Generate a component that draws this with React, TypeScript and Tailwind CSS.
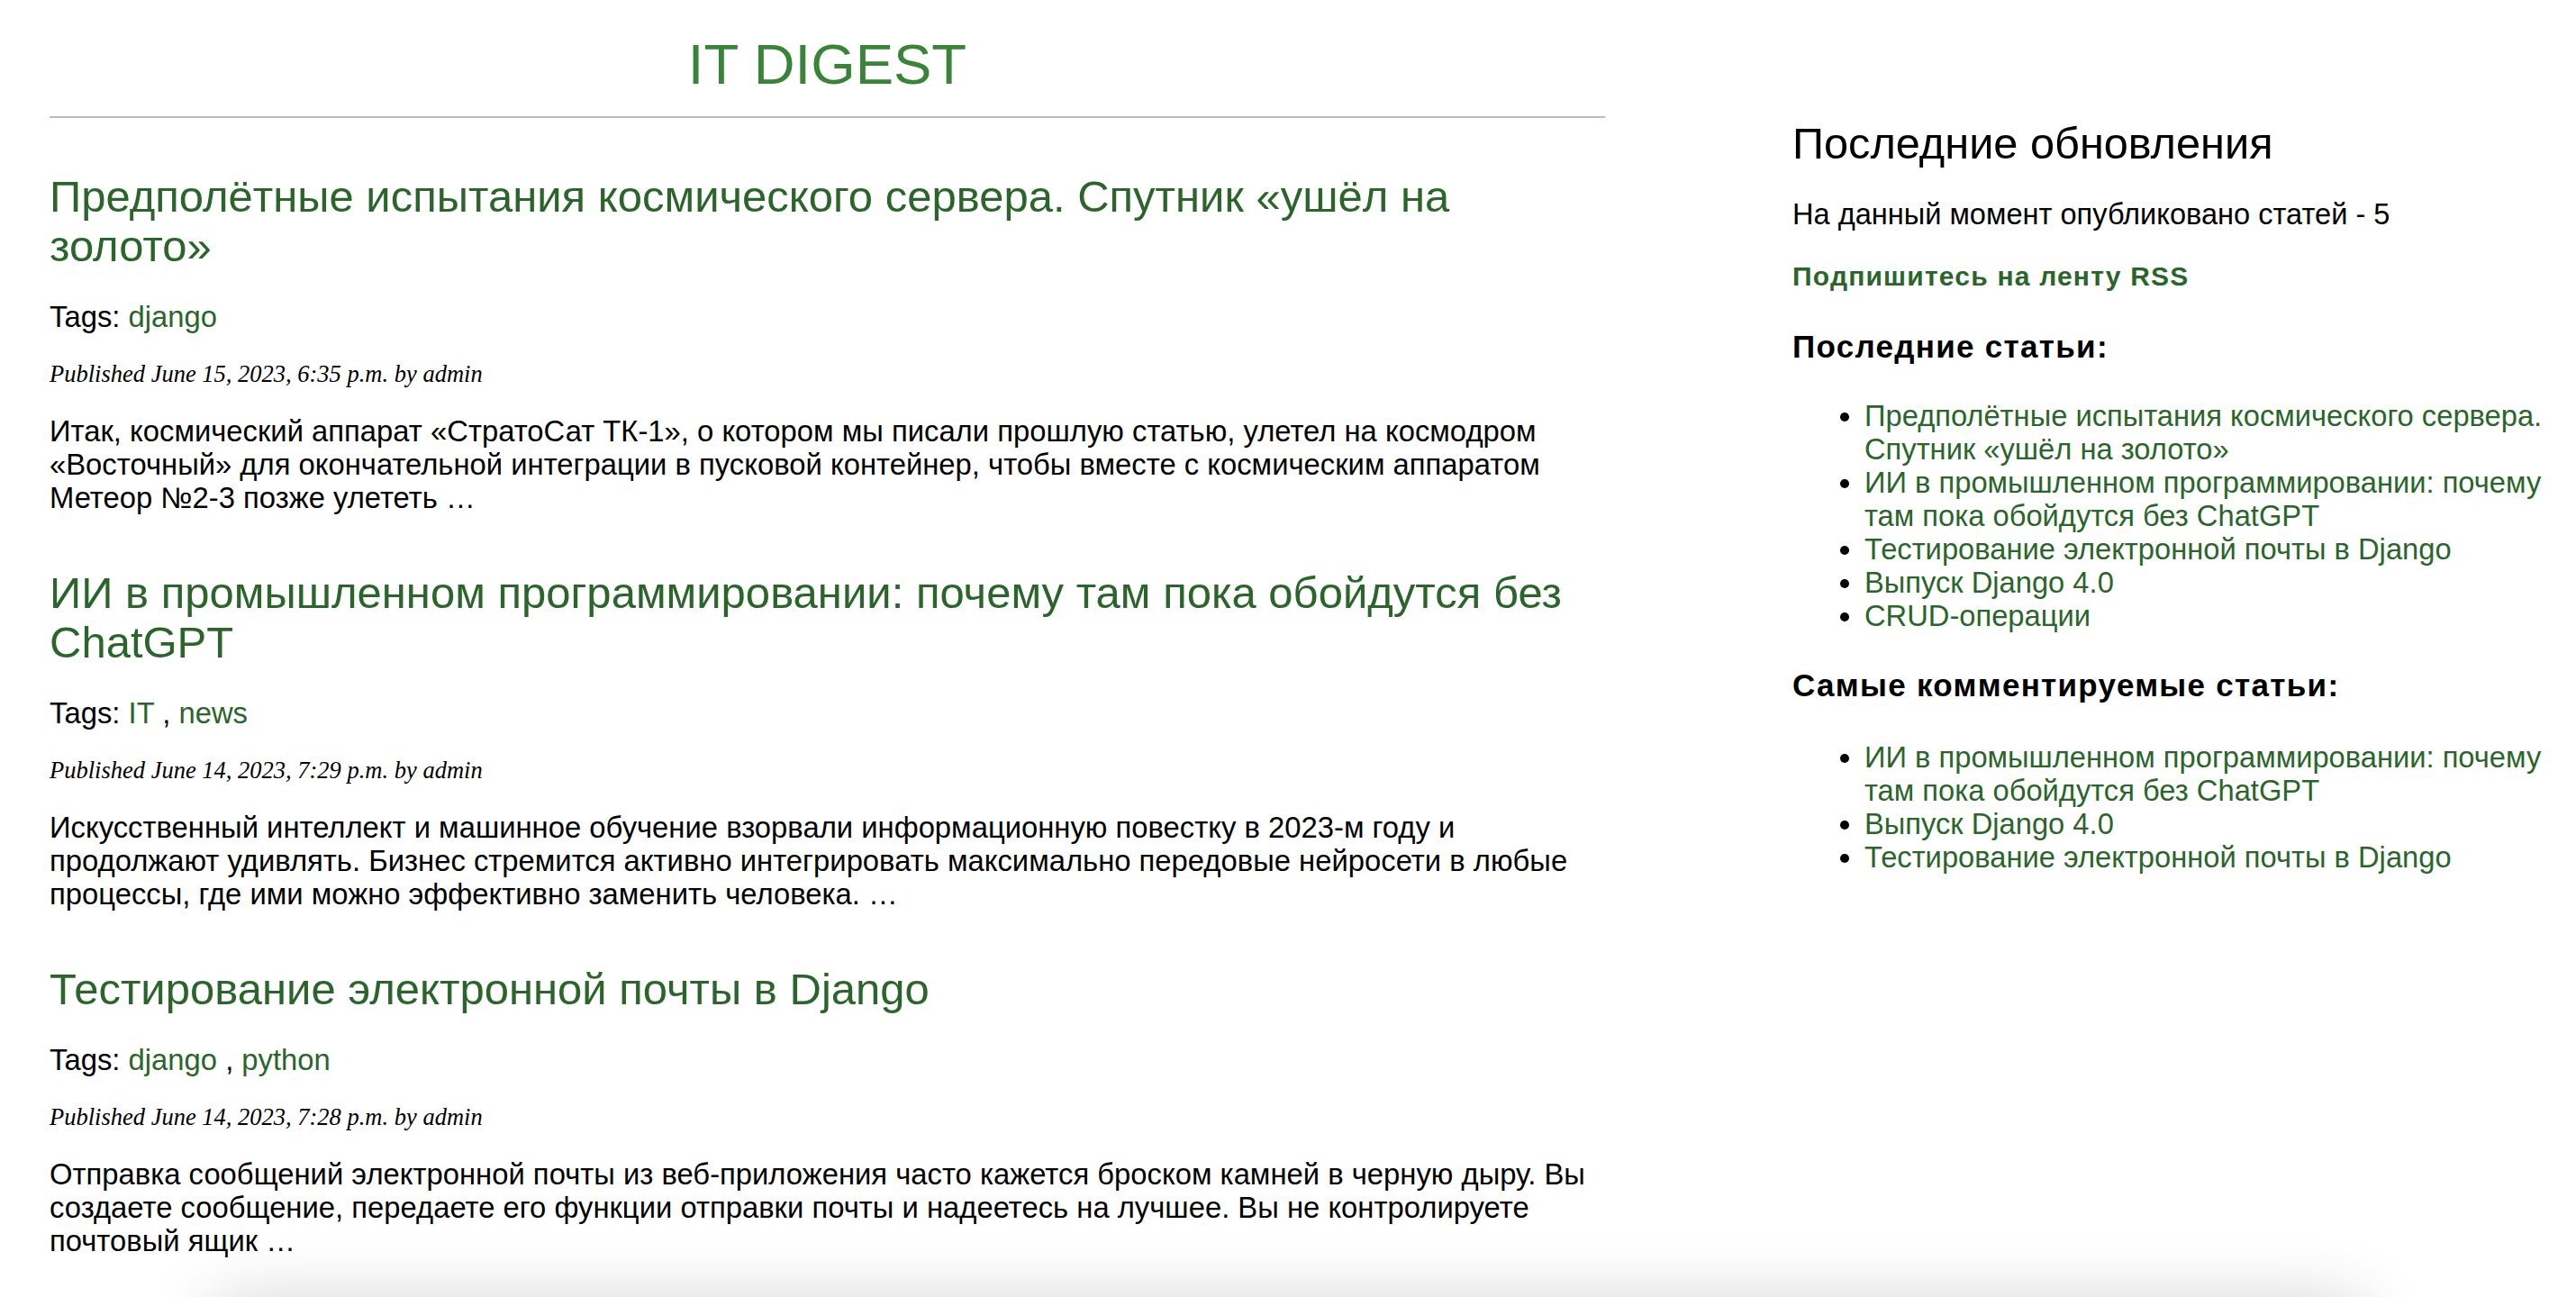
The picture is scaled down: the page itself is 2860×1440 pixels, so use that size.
const articles = [
  {
    title: "Предполётные испытания космического сервера. Спутник «ушёл на золото»",
    tags: ["django"],
    published: "June 15, 2023, 6:35 p.m.",
    body: "Итак, космический аппарат «СтратоСат ТК-1», о котором мы писали прошлую статью, улетел на космодром «Восточный» для окончательной интеграции в пусковой контейнер, чтобы вместе с космическим аппаратом Метеор №2-3 позже улететь …",
  },
  {
    title: "ИИ в промышленном программировании: почему там пока обойдутся без ChatGPT",
    tags: ["IT", "news"],
    published: "June 14, 2023, 7:29 p.m.",
    body: "Искусственный интеллект и машинное обучение взорвали информационную повестку в 2023-м году и продолжают удивлять. Бизнес стремится активно интегрировать максимально передовые нейросети в любые процессы, где ими можно эффективно заменить человека. …",
  },
  {
    title: "Тестирование электронной почты в Django",
    tags: ["django", "python"],
    published: "June 14, 2023, 7:28 p.m.",
    body: "Отправка сообщений электронной почты из веб-приложения часто кажется броском камней в черную дыру. Вы создаете сообщение, передаете его функции отправки почты и надеетесь на лучшее. Вы не контролируете почтовый ящик …",
  },
];

const latest = [
  "Предполётные испытания космического сервера. Спутник «ушёл на золото»",
  "ИИ в промышленном программировании: почему там пока обойдутся без ChatGPT",
  "Тестирование электронной почты в Django",
  "Выпуск Django 4.0",
  "CRUD-операции",
];

const mostCommented = [
  "ИИ в промышленном программировании: почему там пока обойдутся без ChatGPT",
  "Выпуск Django 4.0",
  "Тестирование электронной почты в Django",
];

function Article({ a }: { a: (typeof articles)[number] }) {
  return (
    <article className="mt-[60px]">
      <h2 className="mb-[32px] text-[49px] leading-[55px] text-[#2b652b]">
        <a href="#">{a.title}</a>
      </h2>
      <p className="mb-[31px] text-[32.8px] leading-[37px]">
        Tags:{" "}
        {a.tags.map((t, i) => (
          <span key={t}>
            {i > 0 && " , "}
            <a href="#" className="text-[#2b652b]">{t}</a>
          </span>
        ))}
      </p>
      <p className="mb-[30px] font-['Liberation_Serif',serif] text-[26.5px] italic leading-[29px]">
        Published {a.published} by admin
      </p>
      <p className="text-[32.8px] leading-[37px]">{a.body}</p>
    </article>
  );
}

function PostList({ items, className }: { items: string[]; className: string }) {
  return (
    <ul className={`list-disc pl-[80px] text-[32.7px] leading-[37px] ${className}`}>
      {items.map((t) => (
        <li key={t}>
          <a href="#" className="text-[#2b652b]">{t}</a>
        </li>
      ))}
    </ul>
  );
}

export default function App() {
  return (
    <div className="min-h-screen bg-white font-['Liberation_Sans',Arial,sans-serif] text-black">
      <div className="flex">
        <main className="ml-[55px] w-[1727px] shrink-0">
          <h1 className="mt-[39px] text-center text-[63.5px] leading-[64px] text-[#3a843a]">IT DIGEST</h1>
          <hr className="mt-[26px] border-t-2 border-[#bdbdbd]" />
          {articles.map((a) => (
            <Article key={a.title} a={a} />
          ))}
        </main>
        <aside className="ml-[208px] w-[855px] shrink-0 pt-[132px]">
          <h2 className="text-[48.7px] leading-[55px]">Последние обновления</h2>
          <p className="mt-[32px] text-[32.6px] leading-[37px]">На данный момент опубликовано статей - 5</p>
          <p className="mt-[34px] text-[30px] font-bold leading-[34px] tracking-[1.2px]">
            <a href="#" className="text-[#2b652b]">Подпишитесь на ленту RSS</a>
          </p>
          <h3 className="mt-[41px] text-[35px] font-bold leading-[40px] tracking-[1.3px]">Последние статьи:</h3>
          <PostList items={latest} className="mt-[38px]" />
          <h3 className="mt-[39px] text-[35px] font-bold leading-[40px] tracking-[1.3px]">Самые комментируемые статьи:</h3>
          <PostList items={mostCommented} className="mt-[41px]" />
        </aside>
      </div>
      <div className="mx-[240px] mt-[53px] h-[120px] bg-white shadow-[0_0_80px_rgba(0,0,0,0.2)]" />
    </div>
  );
}
